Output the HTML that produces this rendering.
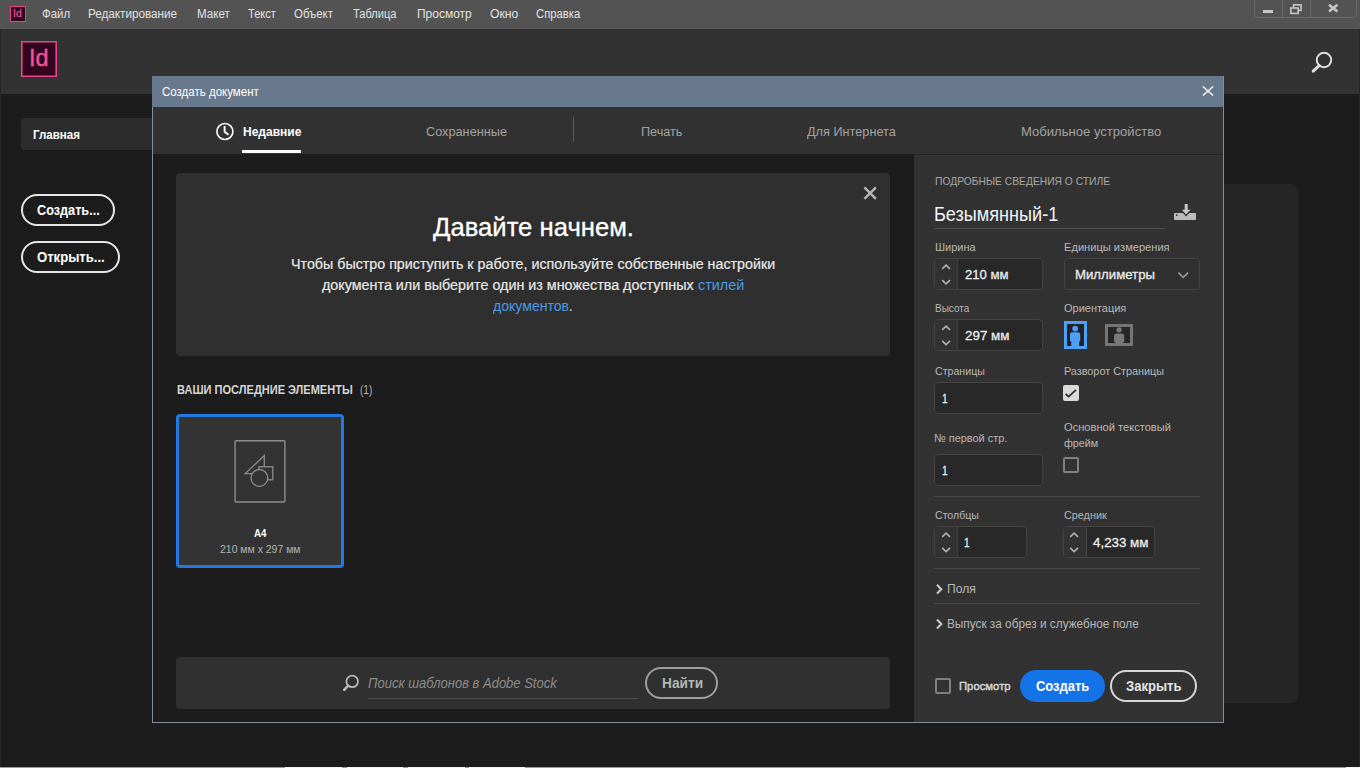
<!DOCTYPE html>
<html lang="ru">
<head>
<meta charset="utf-8">
<title>Adobe InDesign — Создать документ</title>
<style>
html,body{margin:0;padding:0;}
body{width:1360px;height:768px;overflow:hidden;position:relative;background:#1c1c1c;font-family:"Liberation Sans",sans-serif;}
.a{position:absolute;box-sizing:border-box;}
.t{position:absolute;white-space:pre;line-height:1;transform-origin:0 0;font-family:"Liberation Sans",sans-serif;}
svg{position:absolute;overflow:visible;}
/* app chrome */
#menubar{left:0;top:0;width:1360px;height:30px;background:#535353;border-bottom:1px solid #2b2b2b;box-shadow:inset 0 -1px 0 #5a5a5a;}
#topbar{left:0;top:30px;width:1360px;height:64px;background:#323232;}
.edge{top:30px;width:1px;height:737px;background:#272727;}
#winctl{left:1254px;top:-4px;width:103px;height:22px;border:1px solid #6a6a6a;border-radius:4px;}
.wdiv{top:0;width:1px;height:21px;background:#6a6a6a;}
#logo-s{left:10px;top:6px;width:16px;height:16px;background:#33051d;border:1px solid #e4468a;}
#logo-l{left:21px;top:41px;width:36px;height:36px;background:#33051d;box-shadow:inset 0 0 0 1.6px #e8468a;}
#home{left:21px;top:118px;width:140px;height:32px;background:#2c2c2c;border-radius:4px;}
.pill{border:2px solid #e6e6e6;border-radius:16px;height:32px;}
#backpanel{left:1200px;top:184px;width:98px;height:519px;background:#262626;border-radius:6px;}
#botline{left:0;top:767px;width:1360px;height:1px;background:#9c9c9c;}
.botw{top:767px;height:1px;background:#f4f4f4;}
/* dialog */
#dlg{left:152px;top:76px;width:1072px;height:647px;background:#1c1c1c;border:1px solid #868e9d;}
#dlg-title{left:152px;top:76px;width:1072px;height:31px;background:#69798d;border-right:1px solid #868e9d;}
#dlg-tabs{left:153px;top:107px;width:1070px;height:47px;background:#323232;}
#tab-ul{left:242px;top:150px;width:59px;height:3px;background:#ffffff;}
#tab-sep{left:573px;top:117px;width:1px;height:25px;background:#5c5c5c;}
#rpanel{left:914px;top:155px;width:309px;height:567px;background:#323232;}
#rpanel-top{left:914px;top:154px;width:309px;height:1px;background:#232323;}
#welcome{left:176px;top:173px;width:714px;height:183px;background:#2f2f2f;border-radius:4px;}
#card{left:176px;top:414px;width:168px;height:154px;background:#333333;border:3px solid #2478e0;border-radius:4px;}
#searchbar{left:176px;top:657px;width:714px;height:52px;background:#303030;border-radius:4px;}
#search-ul{left:368px;top:698px;width:270px;height:1px;background:#4c4c4c;}
#find{left:645px;top:667px;width:73px;height:32px;border:2px solid #9e9e9e;border-radius:16px;}
/* fields */
.fld{border:1px solid #444444;border-radius:4px;background:#282828;height:32px;overflow:hidden;}
.spin{left:0;top:0;width:23px;height:100%;background:#323232;border-right:1px solid #444444;}
.hr{height:1px;background:#464646;left:934px;width:266px;}
.cb{width:16px;height:16px;border-radius:2px;}
#name-ul{left:934px;top:228px;width:231px;height:1px;background:#4c4c4c;}
#btn-create{left:1020px;top:670px;width:85px;height:32px;border-radius:16px;background:#1473e6;}
#btn-close{left:1110px;top:670px;width:87px;height:32px;border-radius:16px;border:2px solid #d6d6d6;}
</style>
</head>
<body>
<!-- ===== application chrome ===== -->
<div class="a" id="menubar"></div>
<div class="a" id="topbar"></div>
<div class="a" id="winctl">
  <div class="a wdiv" style="left:27px"></div>
  <div class="a wdiv" style="left:55px"></div>
</div>
<svg width="110" height="20" style="left:1250px;top:0" viewBox="1250 0 110 20">
  <rect x="1263" y="10" width="10" height="3" fill="#c6c6c6"/>
  <rect x="1293.6" y="4.8" width="7.4" height="5.6" fill="none" stroke="#c6c6c6" stroke-width="1.6"/>
  <rect x="1290.8" y="8" width="7.4" height="5.4" fill="#535353" stroke="#c6c6c6" stroke-width="1.6"/>
  <path d="M1329 4.8 L1337.4 11.6 M1337.4 4.8 L1329 11.6" stroke="#c6c6c6" stroke-width="2.6" fill="none"/>
</svg>
<div class="a" id="logo-s"></div>
<div class="a" id="logo-l"></div>
<!-- search icon in top bar -->
<svg width="30" height="30" style="left:1308px;top:46px" viewBox="1308 46 30 30">
  <circle cx="1324" cy="60" r="7.2" fill="none" stroke="#dedede" stroke-width="2"/>
  <path d="M1319.2 65.6 L1313.2 71.2" stroke="#dedede" stroke-width="3" stroke-linecap="round"/>
</svg>
<div class="a" id="home"></div>
<div class="a pill" style="left:21px;top:194px;width:94px"></div>
<div class="a pill" style="left:21px;top:241px;width:99px"></div>
<div class="a" id="backpanel"></div>
<div class="a edge" style="left:0"></div>
<div class="a edge" style="left:1359px"></div>
<div class="a" id="botline"></div>
<div class="a botw" style="left:285px;width:57px"></div>
<div class="a botw" style="left:347px;width:56px"></div>
<div class="a botw" style="left:408px;width:57px"></div>
<div class="a botw" style="left:469px;width:56px"></div>
<div class="a botw" style="left:1346px;width:14px"></div>

<!-- ===== dialog ===== -->
<div class="a" id="dlg"></div>
<div class="a" id="dlg-title"></div>
<svg width="14" height="14" style="left:1201px;top:85px" viewBox="0 0 14 14">
  <path d="M1.9 1.4 L12.1 10.6 M12.1 1.4 L1.9 10.6" stroke="#ffffff" stroke-width="1.3" fill="none"/>
</svg>
<div class="a" id="dlg-tabs"></div>
<div class="a" id="tab-ul"></div>
<div class="a" id="tab-sep"></div>
<!-- clock icon -->
<svg width="22" height="22" style="left:214px;top:120px" viewBox="214 120 22 22">
  <circle cx="224.9" cy="131.5" r="8" fill="none" stroke="#ffffff" stroke-width="1.6"/>
  <path d="M224.6 126 L224.6 131.8 L228.5 134.7" fill="none" stroke="#ffffff" stroke-width="1.9"/>
</svg>
<div class="a" id="rpanel-top"></div>
<div class="a" id="rpanel"></div>

<!-- welcome card -->
<div class="a" id="welcome"></div>
<svg width="16" height="16" style="left:862px;top:185px" viewBox="862 185 16 16">
  <path d="M864.4 187.4 L875.9 198.9 M875.9 187.4 L864.4 198.9" stroke="#b4b4b4" stroke-width="2.5" fill="none"/>
</svg>

<!-- recent card -->
<div class="a" id="card"></div>
<svg width="60" height="70" style="left:230px;top:436px" viewBox="230 436 60 70">
  <rect x="235.1" y="440.8" width="49.8" height="61.2" rx="1" fill="none" stroke="#8e8e8e" stroke-width="1.4"/>
  <path d="M264.3 455.6 L264.3 473.6 L245.2 473.6 Z" fill="none" stroke="#8e8e8e" stroke-width="1.3"/>
  <rect x="259" y="466.8" width="13.8" height="13" fill="#333333" stroke="#8e8e8e" stroke-width="1.3"/>
  <circle cx="259.4" cy="477.9" r="8.4" fill="#333333" stroke="#8e8e8e" stroke-width="1.3"/>
</svg>

<!-- stock search -->
<div class="a" id="searchbar"></div>
<svg width="22" height="22" style="left:340px;top:672px" viewBox="340 672 22 22">
  <circle cx="352.2" cy="681.4" r="5.8" fill="none" stroke="#b8b8b8" stroke-width="1.8"/>
  <path d="M348.2 685.6 L344.2 689.9" stroke="#b8b8b8" stroke-width="2.6" stroke-linecap="round"/>
</svg>
<div class="a" id="search-ul"></div>
<div class="a" id="find"></div>

<!-- ===== right panel controls ===== -->
<div class="a" id="name-ul"></div>
<!-- save preset icon -->
<svg width="26" height="20" style="left:1172px;top:202px" viewBox="1172 202 26 20">
  <rect x="1174" y="212.9" width="22" height="7.2" rx="0.8" fill="#bcbcbc"/>
  <path d="M1184.7 204.1 H1187.7 V209.8 H1190.4 L1186.1 214.5 L1181.8 209.8 H1184.7 Z" fill="#c6c6c6" stroke="#323232" stroke-width="2.8" paint-order="stroke"/>
  <circle cx="1176.8" cy="215.1" r="0.9" fill="#323232"/>
</svg>

<!-- width -->
<div class="a fld" style="left:934px;top:258px;width:109px"><div class="a spin"></div></div>
<!-- units -->
<div class="a fld" style="left:1064px;top:258px;width:136px;background:#303030"></div>
<svg width="14" height="10" style="left:1176px;top:270px" viewBox="1176 270 14 10">
  <path d="M1178.3 272.6 L1183.2 277.4 L1188.1 272.6" fill="none" stroke="#9a9a9a" stroke-width="1.5"/>
</svg>
<!-- height -->
<div class="a fld" style="left:934px;top:319px;width:109px"><div class="a spin"></div></div>
<!-- pages -->
<div class="a fld" style="left:934px;top:382px;width:109px"></div>
<!-- first page -->
<div class="a fld" style="left:934px;top:454px;width:109px"></div>
<!-- columns -->
<div class="a fld" style="left:934px;top:526px;width:93px"><div class="a spin"></div></div>
<!-- gutter -->
<div class="a fld" style="left:1063px;top:526px;width:92px"><div class="a spin"></div></div>

<!-- spinner chevrons -->
<svg width="300" height="320" style="left:930px;top:255px" viewBox="930 255 300 320">
  <g fill="none" stroke="#b2b2b2" stroke-width="1.6">
    <path d="M942.2 268.9 L946.1 265.2 L950 268.9"/><path d="M942.2 280.1 L946.1 283.8 L950 280.1"/>
    <path d="M942.2 329.9 L946.1 326.2 L950 329.9"/><path d="M942.2 340.9 L946.1 344.6 L950 340.9"/>
    <path d="M942.2 536.8 L946.1 533.1 L950 536.8"/><path d="M942.2 547.9 L946.1 551.6 L950 547.9"/>
    <path d="M1070.2 536.8 L1074.1 533.1 L1078 536.8"/><path d="M1070.2 547.9 L1074.1 551.6 L1078 547.9"/>
  </g>
</svg>

<!-- orientation icons -->
<svg width="80" height="34" style="left:1060px;top:318px" viewBox="1060 318 80 34">
  <rect x="1065.5" y="322.5" width="20" height="25" fill="#222222" stroke="#4da0f8" stroke-width="3"/>
  <circle cx="1075.2" cy="328.6" r="2.9" fill="#4da0f8"/>
  <path d="M1070 341.2 V334.4 Q1070 332.3 1072.2 332.3 H1078 Q1080.2 332.3 1080.2 334.4 V341.2 H1079.2 V346.5 H1071.2 V341.2 Z" fill="#4da0f8"/>
  <rect x="1106.5" y="325.5" width="25" height="19" fill="#262626" stroke="#767676" stroke-width="3"/>
  <circle cx="1119.1" cy="329.8" r="2.6" fill="#7a7a7a"/>
  <path d="M1114.1 342 V335.6 Q1114.1 333.5 1116.3 333.5 H1122 Q1124.2 333.5 1124.2 335.6 V342 H1123.2 V344 H1115.2 V342 Z" fill="#7a7a7a"/>
</svg>

<!-- checkboxes -->
<div class="a cb" style="left:1063px;top:385px;background:#dadada"></div>
<svg width="16" height="16" style="left:1063px;top:385px" viewBox="1063 385 16 16">
  <path d="M1065.6 394 L1068.6 396.7 L1076 389.8" fill="none" stroke="#2c2c2c" stroke-width="1.7"/>
</svg>
<div class="a cb" style="left:1063px;top:457px;border:2px solid #808080"></div>
<div class="a cb" style="left:935px;top:678px;border:2px solid #808080"></div>

<div class="a hr" style="top:496px"></div>
<div class="a hr" style="top:568px"></div>
<div class="a hr" style="top:603px"></div>
<!-- disclosure chevrons -->
<svg width="10" height="60" style="left:934px;top:580px" viewBox="934 580 10 60">
  <g fill="none" stroke="#c8c8c8" stroke-width="2.1">
    <path d="M937 584.8 L941.3 589.2 L937 593.6"/>
    <path d="M937 619.6 L941.3 624 L937 628.4"/>
  </g>
</svg>

<div class="a" id="btn-create"></div>
<div class="a" id="btn-close"></div>

<!-- ===== all text ===== -->
<span class="t" style="left:42.10px;top:7.60px;font-size:12px;color:#e2e2e2;transform:scaleX(0.9542);">Файл</span>
<span class="t" style="left:87.50px;top:7.60px;font-size:12px;color:#e2e2e2;transform:scaleX(0.9745);">Редактирование</span>
<span class="t" style="left:196.50px;top:7.60px;font-size:12px;color:#e2e2e2;transform:scaleX(0.9662);">Макет</span>
<span class="t" style="left:248.40px;top:7.60px;font-size:12px;color:#e2e2e2;transform:scaleX(0.9246);">Текст</span>
<span class="t" style="left:294.20px;top:7.60px;font-size:12px;color:#e2e2e2;transform:scaleX(0.9524);">Объект</span>
<span class="t" style="left:352.90px;top:7.60px;font-size:12px;color:#e2e2e2;transform:scaleX(0.9224);">Таблица</span>
<span class="t" style="left:416.70px;top:7.60px;font-size:12px;color:#e2e2e2;transform:scaleX(0.9995);">Просмотр</span>
<span class="t" style="left:490.30px;top:7.60px;font-size:12px;color:#e2e2e2;transform:scaleX(1.0138);">Окно</span>
<span class="t" style="left:536.20px;top:7.60px;font-size:12px;color:#e2e2e2;transform:scaleX(0.9388);">Справка</span>
<span class="t" style="left:13.26px;top:8.20px;font-size:11px;color:#f0509a;transform:scaleX(0.9434);-webkit-text-stroke:0.2px #f0509a;">Id</span>
<span class="t" style="left:29.07px;top:46.30px;font-size:24.3px;color:#f2529c;transform:scaleX(0.9671);-webkit-text-stroke:0.4px #f2529c;">Id</span>
<span class="t" style="left:33.40px;top:128.00px;font-size:13.5px;color:#ffffff;transform:scaleX(0.8551);font-weight:700;">Главная</span>
<span class="t" style="left:37.00px;top:203.00px;font-size:14px;color:#ffffff;transform:scaleX(0.9056);font-weight:700;">Создать...</span>
<span class="t" style="left:37.00px;top:250.00px;font-size:14px;color:#ffffff;transform:scaleX(0.9356);font-weight:700;">Открыть...</span>
<span class="t" style="left:161.50px;top:86.20px;font-size:12px;color:#ffffff;transform:scaleX(0.9589);">Создать документ</span>
<span class="t" style="left:242.50px;top:124.90px;font-size:13.5px;color:#ffffff;transform:scaleX(0.8890);font-weight:700;">Недавние</span>
<span class="t" style="left:425.90px;top:125.00px;font-size:13.5px;color:#a2a2a2;transform:scaleX(0.9421);">Сохраненные</span>
<span class="t" style="left:641.06px;top:125.00px;font-size:13.5px;color:#a2a2a2;transform:scaleX(0.9354);">Печать</span>
<span class="t" style="left:806.80px;top:125.00px;font-size:13.5px;color:#a2a2a2;transform:scaleX(0.9416);">Для Интернета</span>
<span class="t" style="left:1021.03px;top:125.00px;font-size:13.5px;color:#a2a2a2;transform:scaleX(0.9682);">Мобильное устройство</span>
<span class="t" style="left:432.70px;top:215.30px;font-size:25px;color:#ffffff;transform:scaleX(1.0268);-webkit-text-stroke:0.3px #fff;">Давайте начнем.</span>
<span class="t" style="left:290.88px;top:257.10px;font-size:14px;color:#e8e8e8;transform:scaleX(1.0191);-webkit-text-stroke:0.2px #e8e8e8;">Чтобы быстро приступить к работе, используйте собственные настройки</span>
<span class="t" style="left:322.40px;top:278.10px;font-size:14px;color:#e8e8e8;transform:scaleX(1.0232);-webkit-text-stroke:0.2px #e8e8e8;">документа или выберите один из множества доступных</span>
<span class="t" style="left:697.60px;top:278.10px;font-size:14px;color:#4b9be6;transform:scaleX(1.0274);">стилей</span>
<span class="t" style="left:493.20px;top:299.20px;font-size:14px;color:#4b9be6;transform:scaleX(1.0045);">документов</span>
<span class="t" style="left:569.10px;top:299.20px;font-size:14px;color:#e8e8e8;transform:scaleX(0.9000);">.</span>
<span class="t" style="left:176.50px;top:384.40px;font-size:12px;color:#d4d4d4;transform:scaleX(0.9207);font-weight:700;">ВАШИ ПОСЛЕДНИЕ ЭЛЕМЕНТЫ</span>
<span class="t" style="left:359.90px;top:384.40px;font-size:12px;color:#b4b4b4;transform:scaleX(0.8385);">(1)</span>
<span class="t" style="left:253.60px;top:528.20px;font-size:11px;color:#ffffff;transform:scaleX(0.8833);font-weight:700;">A4</span>
<span class="t" style="left:219.80px;top:543.80px;font-size:11.5px;color:#b4b4b4;transform:scaleX(0.9095);">210 мм x 297 мм</span>
<span class="t" style="left:368.20px;top:675.90px;font-size:14.5px;color:#8c8c8c;transform:scaleX(0.8970);font-style:italic;">Поиск шаблонов в Adobe Stock</span>
<span class="t" style="left:661.50px;top:675.90px;font-size:14px;color:#b6b6b6;transform:scaleX(0.9792);font-weight:700;">Найти</span>
<span class="t" style="left:934.80px;top:176.40px;font-size:11.5px;color:#a8a8a8;transform:scaleX(0.8945);">ПОДРОБНЫЕ СВЕДЕНИЯ О СТИЛЕ</span>
<span class="t" style="left:933.87px;top:204.90px;font-size:19.5px;color:#f4f4f4;transform:scaleX(0.9275);">Безымянный-1</span>
<span class="t" style="left:934.80px;top:241.90px;font-size:11.5px;color:#b8b8b8;transform:scaleX(0.9552);">Ширина</span>
<span class="t" style="left:1063.90px;top:241.90px;font-size:11.5px;color:#b8b8b8;transform:scaleX(0.9653);">Единицы измерения</span>
<span class="t" style="left:965.00px;top:268.00px;font-size:13.5px;color:#ececec;transform:scaleX(0.9718);-webkit-text-stroke:0.3px #ececec;">210 мм</span>
<span class="t" style="left:1075.02px;top:268.00px;font-size:13.5px;color:#ececec;transform:scaleX(0.9774);-webkit-text-stroke:0.3px #ececec;">Миллиметры</span>
<span class="t" style="left:934.80px;top:302.60px;font-size:11.5px;color:#b8b8b8;transform:scaleX(0.8679);">Высота</span>
<span class="t" style="left:1063.90px;top:302.60px;font-size:11.5px;color:#b8b8b8;transform:scaleX(0.9546);">Ориентация</span>
<span class="t" style="left:965.00px;top:328.90px;font-size:13.5px;color:#ececec;transform:scaleX(0.9920);-webkit-text-stroke:0.3px #ececec;">297 мм</span>
<span class="t" style="left:934.80px;top:366.20px;font-size:11.5px;color:#b8b8b8;transform:scaleX(0.9232);">Страницы</span>
<span class="t" style="left:1063.90px;top:366.20px;font-size:11.5px;color:#b8b8b8;transform:scaleX(0.9412);">Разворот Страницы</span>
<span class="t" style="left:942.05px;top:392.10px;font-size:13.5px;color:#ececec;transform:scaleX(0.7500);-webkit-text-stroke:0.3px #ececec;">1</span>
<span class="t" style="left:933.85px;top:433.20px;font-size:11.5px;color:#b8b8b8;transform:scaleX(0.9505);">№ первой стр.</span>
<span class="t" style="left:1063.90px;top:422.20px;font-size:11.5px;color:#b8b8b8;transform:scaleX(0.9658);">Основной текстовый</span>
<span class="t" style="left:1063.90px;top:438.10px;font-size:11.5px;color:#b8b8b8;transform:scaleX(0.9352);">фрейм</span>
<span class="t" style="left:942.05px;top:464.00px;font-size:13.5px;color:#ececec;transform:scaleX(0.7500);-webkit-text-stroke:0.3px #ececec;">1</span>
<span class="t" style="left:934.80px;top:509.80px;font-size:11.5px;color:#b8b8b8;transform:scaleX(0.9185);">Столбцы</span>
<span class="t" style="left:1063.90px;top:509.80px;font-size:11.5px;color:#b8b8b8;transform:scaleX(0.9411);">Средник</span>
<span class="t" style="left:964.15px;top:535.70px;font-size:13.5px;color:#ececec;transform:scaleX(0.7500);-webkit-text-stroke:0.3px #ececec;">1</span>
<span class="t" style="left:1093.30px;top:535.70px;font-size:13.5px;color:#ececec;transform:scaleX(0.9890);-webkit-text-stroke:0.3px #ececec;">4,233 мм</span>
<span class="t" style="left:946.77px;top:581.70px;font-size:13px;color:#b8b8b8;transform:scaleX(0.9339);">Поля</span>
<span class="t" style="left:946.79px;top:617.30px;font-size:13px;color:#b8b8b8;transform:scaleX(0.9077);">Выпуск за обрез и служебное поле</span>
<span class="t" style="left:959.20px;top:680.80px;font-size:11.5px;color:#d6d6d6;transform:scaleX(0.9823);-webkit-text-stroke:0.45px #d6d6d6;">Просмотр</span>
<span class="t" style="left:1035.80px;top:679.00px;font-size:14.5px;color:#ffffff;transform:scaleX(0.8943);font-weight:700;">Создать</span>
<span class="t" style="left:1126.00px;top:679.00px;font-size:14.5px;color:#e4e4e4;transform:scaleX(0.9005);font-weight:700;">Закрыть</span>
</body>
</html>
